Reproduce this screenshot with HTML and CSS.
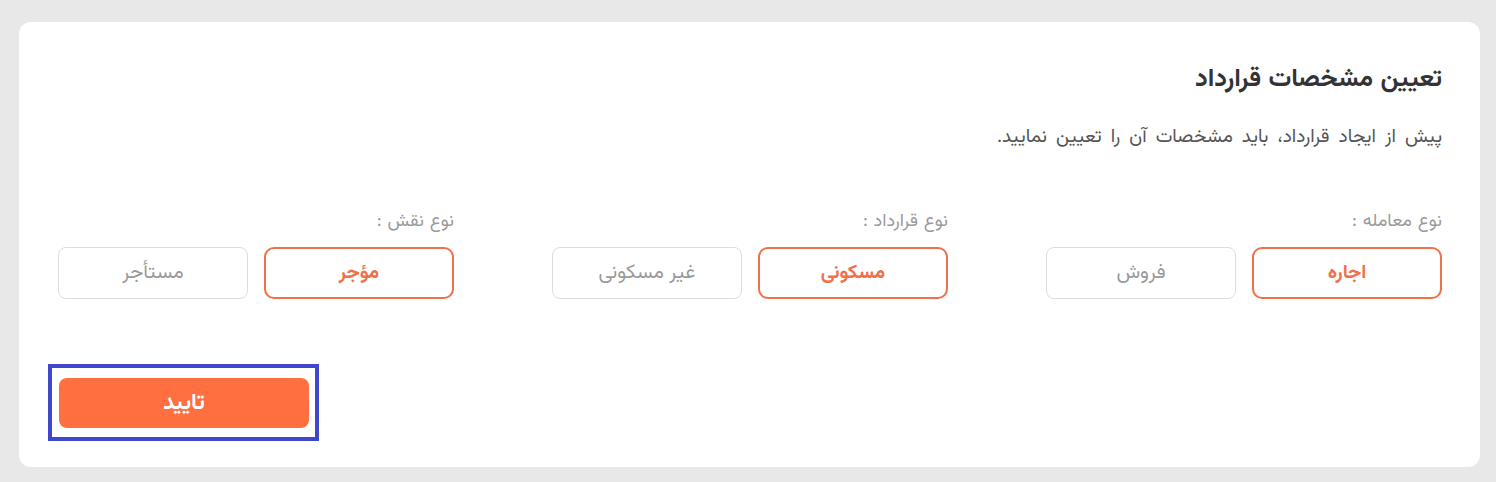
FILE: index.html
```html
<!DOCTYPE html>
<html lang="fa" dir="rtl">
<head>
<meta charset="utf-8">
<title>تعیین مشخصات قرارداد</title>
<link rel="stylesheet" href="styles.css">
</head>
<body>
<main class="card">
  <h1 class="title">تعیین مشخصات قرارداد</h1>
  <p class="subtitle">پیش از ایجاد قرارداد، باید مشخصات آن را تعیین نمایید.</p>
  <div class="groups">
    <div class="group">
      <div class="label">نوع معامله :</div>
      <div class="options">
        <button class="opt opt-active">اجاره</button>
        <button class="opt">فروش</button>
      </div>
    </div>
    <div class="group">
      <div class="label">نوع قرارداد :</div>
      <div class="options">
        <button class="opt opt-active">مسکونی</button>
        <button class="opt">غیر مسکونی</button>
      </div>
    </div>
    <div class="group">
      <div class="label">نوع نقش :</div>
      <div class="options">
        <button class="opt opt-active">مؤجر</button>
        <button class="opt">مستأجر</button>
      </div>
    </div>
  </div>
  <div class="actions">
    <div class="highlight">
      <button class="confirm">تایید</button>
    </div>
  </div>
</main>
</body>
</html>
```
FILE: styles.css
```css
* { box-sizing: border-box; }
html, body { margin: 0; }
body {
  background: #e8e8e8;
  padding: 22px 16px 15px 19px;
  font-family: "Vazirmatn", "Noto Sans Arabic", "DejaVu Sans", sans-serif;
  direction: rtl;
}
.card {
  background: #ffffff;
  border-radius: 12px;
  padding: 44px 38px 26px 39px;
  height: 445px;
}
.title {
  margin: 0;
  font-size: 25.5px;
  line-height: 28px;
  word-spacing: 1px;
  font-weight: bold;
  color: #333333;
}
.subtitle {
  margin: 32px 0 0;
  font-size: 19px;
  line-height: 24px;
  word-spacing: 4px;
  color: #555555;
}
.groups {
  margin-top: 61px;
  display: grid;
  grid-template-columns: repeat(3, 1fr);
  column-gap: 98px;
}
.label {
  font-size: 18px;
  line-height: 22px;
  word-spacing: 1px;
  color: #9a9a9a;
}
.options {
  margin-top: 14px;
  display: grid;
  grid-template-columns: 1fr 1fr;
  column-gap: 16px;
}
.opt {
  height: 52px;
  border: 1px solid #dedede;
  border-radius: 8px;
  background: #ffffff;
  font-family: inherit;
  font-size: 20px;
  color: #9a9a9a;
  padding: 0;
  cursor: pointer;
}
.opt-active {
  border: 2px solid #ef7049;
  border-radius: 10px;
  color: #ef7049;
  font-size: 19.5px;
  font-weight: bold;
}
.actions {
  margin-top: 65px;
  display: flex;
  justify-content: flex-end;
  margin-left: -10px;
}
.highlight {
  border: 4px solid #3f48cc;
  padding: 10px 6px 9px 7px;
}
.confirm {
  display: block;
  width: 250px;
  height: 50px;
  border: none;
  border-radius: 8px;
  background: #ff6f3f;
  color: #ffffff;
  font-family: inherit;
  font-size: 22px;
  font-weight: bold;
  cursor: pointer;
}
```
